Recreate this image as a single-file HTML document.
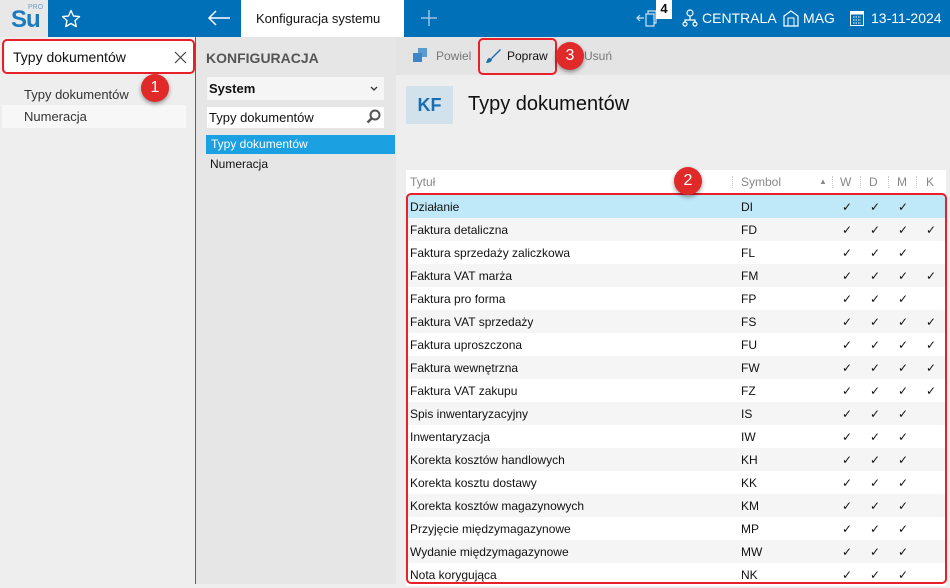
<!DOCTYPE html>
<html><head><meta charset="utf-8"><style>
*{margin:0;padding:0;box-sizing:border-box}
body{width:950px;height:584px;overflow:hidden;position:relative;font-family:"Segoe UI","Liberation Sans",sans-serif;font-size:12px;color:#111;background:#eeeeee}
.a{position:absolute}
.row{position:absolute;left:406px;width:540px;height:23px;line-height:25px;font-size:12px}
.row span{position:absolute}
.circ{position:absolute;width:28px;height:28px;border-radius:50%;background:#e02a2a;color:#fff;font-size:16px;text-align:center;line-height:28px;box-shadow:0 2px 4px rgba(0,0,0,.4)}
</style></head><body>
<div class="a" style="left:0;top:0;width:950px;height:37px;background:#0070b8"></div>
<div class="a" style="left:0;top:0;width:48px;height:37px;background:#e8e8e8"></div>
<div class="a" style="left:11px;top:7px;font-size:24px;font-weight:bold;color:#1a7bc0;letter-spacing:-1px;line-height:26px">Su</div>
<div class="a" style="left:28px;top:4px;font-size:7px;color:#6aa0cc">PRO</div>
<svg class="a" style="left:61px;top:9px" width="20" height="20" viewBox="0 0 20 20"><path d="M10 1.5l2.5 5.5 6 .6-4.5 4 1.3 6-5.3-3.1-5.3 3.1 1.3-6-4.5-4 6-.6z" fill="none" stroke="#fff" stroke-width="1.4" stroke-linejoin="round"/></svg>
<svg class="a" style="left:207px;top:10px" width="24" height="16" viewBox="0 0 24 16"><path d="M23 8H2M9 1L2 8l7 7" fill="none" stroke="#fff" stroke-width="1.5"/></svg>
<div class="a" style="left:241px;top:0;width:163px;height:37px;background:#fff;font-size:13px;line-height:37px;padding-left:15px">Konfiguracja systemu</div>
<svg class="a" style="left:420px;top:9px" width="18" height="18"><path d="M9 1v16M1 9h16" stroke="#9cc4e4" stroke-width="1.5"/></svg>
<svg class="a" style="left:636px;top:8px" width="26" height="22" viewBox="0 0 26 22"><path d="M8 10H1M4 7l-3 3 3 3" fill="none" stroke="#cfe2f2" stroke-width="1.2"/><rect x="10" y="6" width="8" height="12" fill="none" stroke="#cfe2f2" stroke-width="1.2"/><path d="M12 6V3h8v12h-2" fill="none" stroke="#cfe2f2" stroke-width="1.2"/></svg>
<div class="a" style="left:656px;top:0;width:16px;height:19px;background:#fff;font-weight:bold;font-size:13px;text-align:center;line-height:17px">4</div>
<svg class="a" style="left:682px;top:9px" width="16" height="18" viewBox="0 0 16 18"><circle cx="8" cy="4" r="3" fill="none" stroke="#fff" stroke-width="1.2"/><path d="M8 7v4M3 14v-3h10v3" fill="none" stroke="#fff" stroke-width="1.2"/><circle cx="3" cy="15" r="2" fill="none" stroke="#fff" stroke-width="1.2"/><circle cx="13" cy="15" r="2" fill="none" stroke="#fff" stroke-width="1.2"/></svg>
<div class="a" style="left:702px;top:10px;color:#fff;font-size:14px">CENTRALA</div>
<svg class="a" style="left:783px;top:9px" width="16" height="18" viewBox="0 0 16 18"><path d="M1 17V7l7-5 7 5v10z" fill="none" stroke="#fff" stroke-width="1.2"/><path d="M5 9h6v8H5z" fill="none" stroke="#fff" stroke-width="1"/></svg>
<div class="a" style="left:803px;top:10px;color:#fff;font-size:14px">MAG</div>
<svg class="a" style="left:850px;top:11px" width="14" height="15"><rect x="0.5" y="0.5" width="13" height="14" fill="none" stroke="#fff"/><rect x="0.5" y="0.5" width="13" height="3" fill="#fff"/><path d="M3 6h8M3 9h8M3 12h8" stroke="#fff" stroke-dasharray="1.5 1"/></svg>
<div class="a" style="left:871px;top:10px;color:#fff;font-size:14px">13-11-2024</div>

<div class="a" style="left:0;top:37px;width:195px;height:547px;background:#eeeeee"></div>
<div class="a" style="left:5px;top:40px;width:188px;height:33px;background:#fff"></div>
<div class="a" style="left:13px;top:49px;font-size:14px">Typy dokumentów</div>
<svg class="a" style="left:174px;top:51px" width="13" height="13"><path d="M1 1l11 11M12 1L1 12" stroke="#444" stroke-width="1.2"/></svg>
<div class="a" style="left:24px;top:87px;font-size:13px;color:#333">Typy dokumentów</div>
<div class="a" style="left:2px;top:105px;width:184px;height:23px;background:#f7f7f7"></div>
<div class="a" style="left:24px;top:109px;font-size:13px;color:#333">Numeracja</div>
<div class="a" style="left:195px;top:37px;width:1px;height:547px;background:#2a6ea8"></div>

<div class="a" style="left:196px;top:37px;width:200px;height:547px;background:#e6e6e6"></div>
<div class="a" style="left:206px;top:50px;font-size:14px;font-weight:bold;color:#555">KONFIGURACJA</div>
<div class="a" style="left:207px;top:77px;width:177px;height:23px;background:#f5f5f5;font-size:13px;font-weight:bold;line-height:23px;padding-left:2px">System</div>
<svg class="a" style="left:370px;top:86px" width="8" height="6"><path d="M1 1l3 3 3-3" fill="none" stroke="#333" stroke-width="1.3"/></svg>
<div class="a" style="left:207px;top:107px;width:177px;height:21px;background:#fff;font-size:13px;line-height:22px;padding-left:2px">Typy dokumentów</div>
<svg class="a" style="left:366px;top:109px" width="16" height="16"><circle cx="9" cy="6" r="4.5" fill="none" stroke="#555" stroke-width="2"/><path d="M6 9l-4.5 4.5" stroke="#555" stroke-width="2.5"/></svg>
<div class="a" style="left:206px;top:135px;width:189px;height:19px;background:#1ba1e2;color:#fff;font-size:12px;line-height:19px;padding-left:5px">Typy dokumentów</div>
<div class="a" style="left:210px;top:157px;font-size:12px">Numeracja</div>

<div class="a" style="left:396px;top:37px;width:554px;height:38px;background:#e4e4e4"></div>
<svg class="a" style="left:413px;top:48px" width="14" height="14"><rect x="5" y="0" width="9" height="9" fill="#5a9bd0"/><rect x="0" y="5" width="9" height="9" fill="#3d85c6"/></svg>
<div class="a" style="left:436px;top:49px;color:#777;font-size:12px">Powiel</div>
<svg class="a" style="left:485px;top:48px" width="16" height="16"><path d="M15 1L6 10l1 1 9-9z" fill="#1a6eb0"/><path d="M5 10c-3 0-3 3-4 5 3 0 6-1 6-4z" fill="#1a6eb0"/></svg>
<div class="a" style="left:507px;top:49px;font-size:12px">Popraw</div>
<div class="a" style="left:584px;top:49px;color:#777;font-size:12px">Usuń</div>

<div class="a" style="left:406px;top:86px;width:47px;height:38px;background:#d2e2ec;color:#1a6eb0;font-size:18px;font-weight:bold;text-align:center;line-height:38px">KF</div>
<div class="a" style="left:468px;top:93px;font-size:20px">Typy dokumentów</div>

<div class="a" style="left:406px;top:170px;width:540px;height:414px;background:#fff"></div>
<div class="a" style="left:406px;top:170px;width:540px;height:24px;font-size:12px;color:#888;line-height:24px">
<span class="a" style="left:4px">Tytuł</span><span class="a" style="left:335px">Symbol</span><span class="a" style="left:413px;font-size:8px">▲</span>
<span class="a" style="left:434px">W</span><span class="a" style="left:463px">D</span><span class="a" style="left:491px">M</span><span class="a" style="left:520px">K</span>
<span class="a" style="left:326px;top:6px;height:12px;border-left:1px dotted #ccc"></span>
<span class="a" style="left:426px;top:6px;height:12px;border-left:1px dotted #ccc"></span>
<span class="a" style="left:454px;top:6px;height:12px;border-left:1px dotted #ccc"></span>
<span class="a" style="left:482px;top:6px;height:12px;border-left:1px dotted #ccc"></span>
<span class="a" style="left:510px;top:6px;height:12px;border-left:1px dotted #ccc"></span>
</div>
<div id="rows"></div>
<script>
const d=[["Działanie","DI",0],["Faktura detaliczna","FD",1],["Faktura sprzedaży zaliczkowa","FL",0],["Faktura VAT marża","FM",1],["Faktura pro forma","FP",0],["Faktura VAT sprzedaży","FS",1],["Faktura uproszczona","FU",1],["Faktura wewnętrzna","FW",1],["Faktura VAT zakupu","FZ",1],["Spis inwentaryzacyjny","IS",0],["Inwentaryzacja","IW",0],["Korekta kosztów handlowych","KH",0],["Korekta kosztu dostawy","KK",0],["Korekta kosztów magazynowych","KM",0],["Przyjęcie międzymagazynowe","MP",0],["Wydanie międzymagazynowe","MW",0],["Nota korygująca","NK",0]];
let h="";d.forEach((r,i)=>{const bg=i==0?"#bfe8f8":(i%2?"#f5f5f5":"#fff");
h+=`<div class="row" style="top:${195+23*i}px;background:${bg}"><span style="left:4px">${r[0]}</span><span style="left:335px">${r[1]}</span><span style="left:436px">✓</span><span style="left:464px">✓</span><span style="left:492px">✓</span>${r[2]?'<span style="left:520px">✓</span>':''}</div>`});
document.getElementById("rows").innerHTML=h;
</script>

<div class="a" style="left:2px;top:39px;width:193px;height:35px;border:2px solid #e8202a;border-radius:5px"></div>
<div class="circ" style="left:141px;top:74px">1</div>
<div class="a" style="left:406px;top:193px;width:541px;height:391px;border:2px solid #e8202a;border-radius:5px"></div>
<div class="circ" style="left:674px;top:167px">2</div>
<div class="a" style="left:478px;top:38px;width:79px;height:37px;border:2px solid #e8202a;border-radius:5px"></div>
<div class="circ" style="left:556px;top:42px">3</div>
</body></html>
